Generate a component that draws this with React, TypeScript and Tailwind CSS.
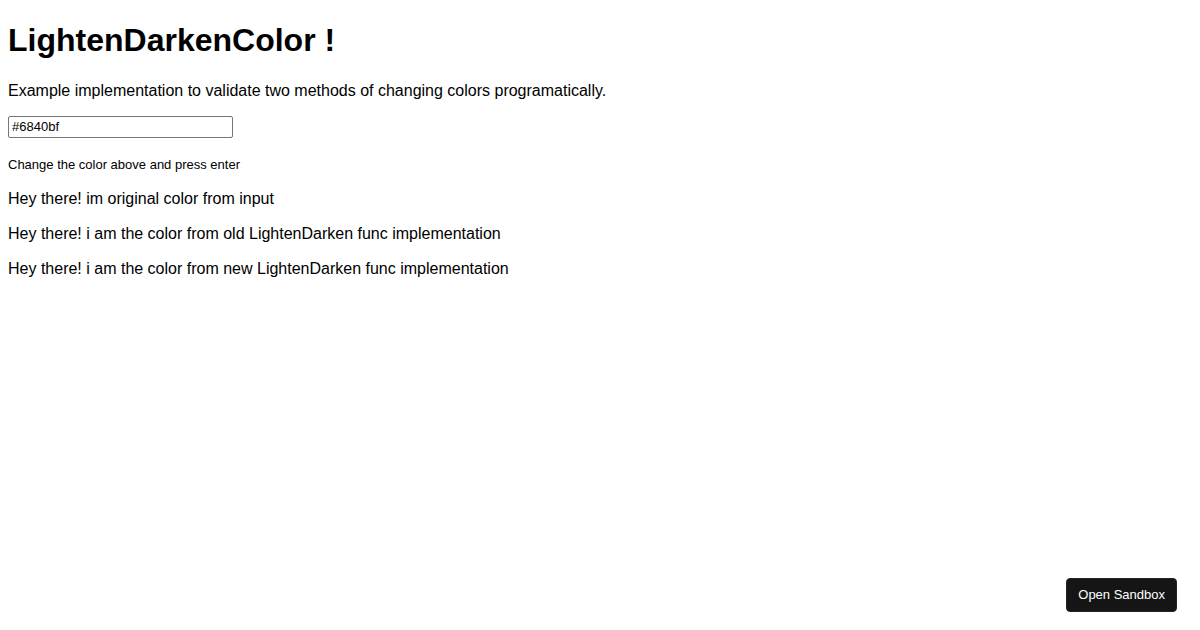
import { useState } from 'react'

const lines = [
  'Hey there! im original color from input',
  'Hey there! i am the color from old LightenDarken func implementation',
  'Hey there! i am the color from new LightenDarken func implementation',
]

export default function App() {
  const [color, setColor] = useState('#6840bf')

  return (
    <main className="px-2 pt-5 font-['Liberation_Sans',Arial,sans-serif] text-base leading-[19px] text-black">
      <h1 className="mb-[21px] text-[32px] font-bold leading-10">LightenDarkenColor !</h1>
      <p className="mb-4">
        Example implementation to validate two methods of changing colors programatically.
      </p>
      <form onSubmit={e => e.preventDefault()}>
        <input
          id="color"
          type="text"
          value={color}
          onChange={e => setColor(e.target.value)}
          className="block h-[22px] w-[225px] rounded-xs border border-[#767676] bg-white px-[3px] pb-0.5 text-[13px]"
        />
        <label htmlFor="color" className="mt-[17px] mb-[15px] block text-[13px]">
          Change the color above and press enter
        </label>
      </form>
      <div className="flex flex-col gap-4">
        {lines.map(line => (
          <p key={line}>{line}</p>
        ))}
      </div>

      {/* Sandbox link, pinned to the bottom corner */}
      <button
        type="button"
        className="fixed right-[23px] bottom-[18px] rounded-sm border border-[#252525] bg-[#151515] px-[11px] py-2 text-[13px] leading-4 text-white"
      >
        Open Sandbox
      </button>
    </main>
  )
}
